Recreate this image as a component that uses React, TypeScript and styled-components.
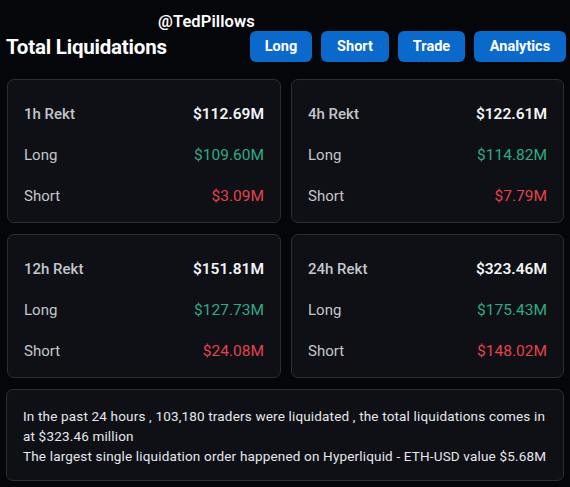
import React from "react";
import styled, { createGlobalStyle } from "styled-components";

const GlobalStyle = createGlobalStyle`
  html, body {
    margin: 0;
    padding: 0;
    background: #05060a;
  }
  body {
    font-family: Roboto, "Noto Sans", "Liberation Sans", sans-serif;
    color: #ffffff;
  }
`;

const Page = styled.div`
  position: relative;
  width: 570px;
  height: 487px;
  box-sizing: border-box;
  padding: 31px 4px 0 6px;
  background: #05060a;
`;

const Watermark = styled.div`
  position: absolute;
  left: 158px;
  top: 12px;
  font-size: 16.5px;
  font-weight: 600;
  color: #ffffff;
  letter-spacing: 0.1px;
`;

const Header = styled.div`
  display: flex;
  align-items: center;
  justify-content: space-between;
  height: 31px;
`;

const Title = styled.h1`
  margin: 1px 0 0 0;
  font-size: 20.5px;
  font-weight: 700;
  letter-spacing: -0.2px;
  color: #ffffff;
`;

const Nav = styled.div`
  display: flex;
  gap: 9px;
`;

const NavButton = styled.button<{ $w: number }>`
  width: ${({ $w }) => $w}px;
  height: 31px;
  border: none;
  border-radius: 6px;
  background: #0b69cc;
  color: #ffffff;
  font-family: inherit;
  font-size: 14.5px;
  font-weight: 700;
  cursor: pointer;
`;

const Grid = styled.div`
  display: grid;
  grid-template-columns: 274px 273px;
  column-gap: 10px;
  row-gap: 11px;
  margin: 17px 0 0 1px;
`;

const Card = styled.div`
  height: 144px;
  box-sizing: border-box;
  padding: 13px 16px 0 16px;
  background: #0e1016;
  border: 1px solid #2b2e35;
  border-radius: 7px;
`;

const Row = styled.div`
  display: flex;
  align-items: center;
  justify-content: space-between;
  height: 41px;
  font-size: 15px;
`;

const Label = styled.span<{ $head?: boolean }>`
  color: #c4c6cb;
  font-weight: ${({ $head }) => ($head ? 500 : 400)};
`;

const Value = styled.span<{ $tone: "total" | "long" | "short" }>`
  font-size: 15.5px;
  font-weight: ${({ $tone }) => ($tone === "total" ? 600 : 400)};
  color: ${({ $tone }) =>
    $tone === "total" ? "#f4f5f7" : $tone === "long" ? "#2eaa86" : "#e2434d"};
`;

const Summary = styled.div`
  margin: 11px 2px 0 0;
  height: 92px;
  box-sizing: border-box;
  padding: 16px 12px 0 16px;
  background: #0e1016;
  border: 1px solid #2b2e35;
  border-radius: 7px;
  font-size: 13.5px;
  line-height: 20px;
  letter-spacing: 0.17px;
  color: #e6e7ea;
`;

const Line = styled.p`
  margin: 0;
`;

const periods = [
  { name: "1h Rekt", total: "$112.69M", long: "$109.60M", short: "$3.09M" },
  { name: "4h Rekt", total: "$122.61M", long: "$114.82M", short: "$7.79M" },
  { name: "12h Rekt", total: "$151.81M", long: "$127.73M", short: "$24.08M" },
  { name: "24h Rekt", total: "$323.46M", long: "$175.43M", short: "$148.02M" },
];

const buttons = [
  { label: "Long", w: 62 },
  { label: "Short", w: 68 },
  { label: "Trade", w: 67 },
  { label: "Analytics", w: 92 },
];

export default function App() {
  return (
    <>
      <GlobalStyle />
      <Page>
        <Watermark>@TedPillows</Watermark>
        <Header>
          <Title>Total Liquidations</Title>
          <Nav>
            {buttons.map((b) => (
              <NavButton key={b.label} $w={b.w}>
                {b.label}
              </NavButton>
            ))}
          </Nav>
        </Header>
        <Grid>
          {periods.map((p) => (
            <Card key={p.name}>
              <Row>
                <Label $head>{p.name}</Label>
                <Value $tone="total">{p.total}</Value>
              </Row>
              <Row>
                <Label>Long</Label>
                <Value $tone="long">{p.long}</Value>
              </Row>
              <Row>
                <Label>Short</Label>
                <Value $tone="short">{p.short}</Value>
              </Row>
            </Card>
          ))}
        </Grid>
        <Summary>
          <Line>
            In the past 24 hours , 103,180 traders were liquidated , the total
            liquidations comes in at $323.46 million
          </Line>
          <Line>
            The largest single liquidation order happened on Hyperliquid -
            ETH-USD value $5.68M
          </Line>
        </Summary>
      </Page>
    </>
  );
}
